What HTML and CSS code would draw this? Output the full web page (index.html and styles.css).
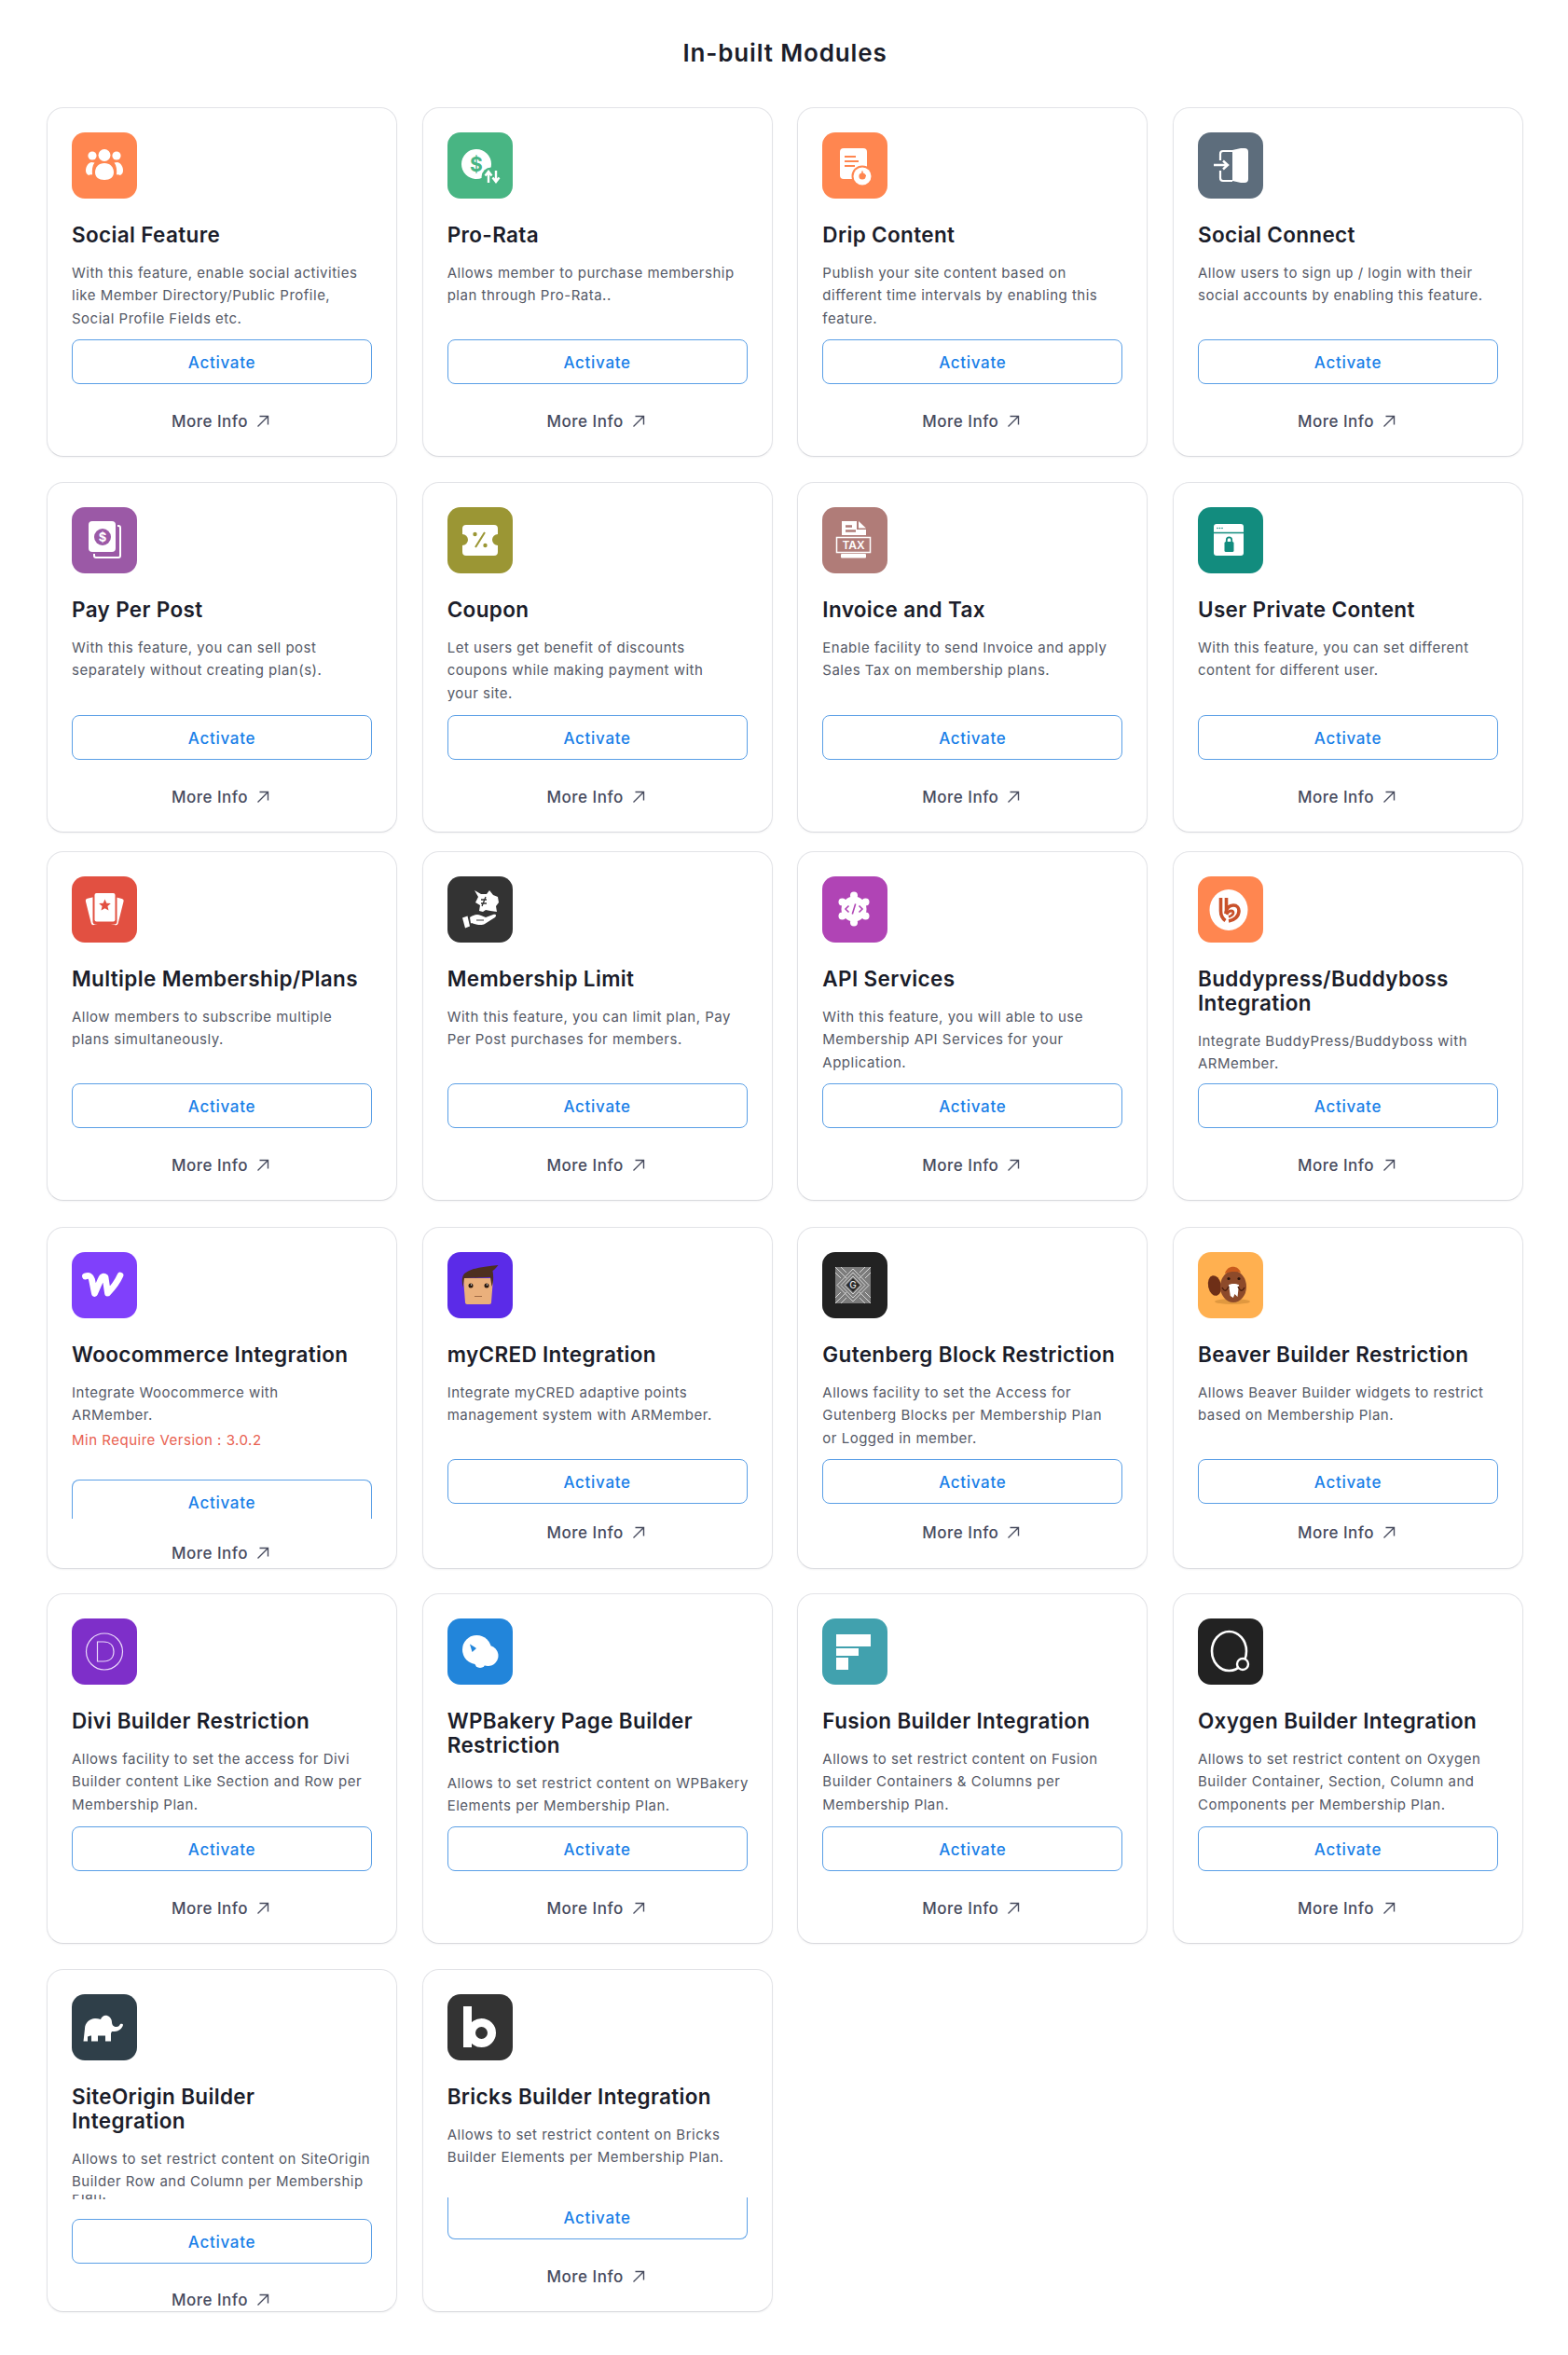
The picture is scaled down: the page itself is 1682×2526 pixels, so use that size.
FILE: index.html
```html
<!DOCTYPE html>
<html lang="en">
<head>
<meta charset="utf-8">
<title>In-built Modules</title>
<link rel="stylesheet" href="styles.css">
</head>
<body>
<main class="page">
<h1 class="page-title">In-built Modules</h1>

<section class="row row-1">
  <article class="card">
    <div class="icon bg-orange"><svg class="ico" viewBox="0 0 70 71" fill="#fff"><circle cx="35" cy="24.5" r="6.5"/><circle cx="22" cy="25" r="4.6"/><circle cx="48" cy="25" r="4.6"/><path d="M25 43c0-6 4-10 10-10s10 4 10 10c0 5-4 8-10 8s-10-3-10-8z"/><path d="M21 32c-4 1-6 5-6 9 0 2 1 4 3 5 1-.6 3-1 4-.5-.5-5 0-10 2.500-13z"/><path d="M49 32c4 1 6 5 6 9 0 2-1 4-3 5-1-.6-3-1-4-.5.500-5 0-10-2.500-13z"/></svg></div>
    <h2 class="title">Social Feature</h2>
    <p class="desc">With this feature, enable social activities<br>like Member Directory/Public Profile,<br>Social Profile Fields etc.</p>
    <a class="btn">Activate</a>
    <a class="more">More Info <svg class="arrow" viewBox="0 0 14 14"><path d="M1.500 12.500 12 2M3.500 1.500h9v9"/></svg></a>
  </article>
  <article class="card">
    <div class="icon bg-green"><svg class="ico" viewBox="0 0 70 71"><circle cx="31" cy="34" r="16" fill="#fff"/><circle cx="47" cy="48" r="10.500" fill="#48b583"/><text x="31" y="41.500" class="svg-t svg-dollar-l">$</text><path d="M44 54V43M40.500 46.500 44 42l3.500 4.500M52 41v11M48.500 48.500 52 53l3.500-4.500" fill="none" stroke="#fff" stroke-width="2.400"/></svg></div>
    <h2 class="title">Pro-Rata</h2>
    <p class="desc">Allows member to purchase membership<br>plan through Pro-Rata..</p>
    <a class="btn">Activate</a>
    <a class="more">More Info <svg class="arrow" viewBox="0 0 14 14"><path d="M1.500 12.500 12 2M3.500 1.500h9v9"/></svg></a>
  </article>
  <article class="card">
    <div class="icon bg-orange"><svg class="ico" viewBox="0 0 70 71"><rect x="19" y="17" width="29" height="33" rx="4" fill="#fff"/><path d="M24 26h12M24 31h15M24 36h11" stroke="#ff8650" stroke-width="2.200"/><circle cx="43" cy="47" r="11.500" fill="#ff8650"/><circle cx="43" cy="47" r="9.500" fill="#fff"/><circle cx="43" cy="47" r="3.600" fill="#ff8650"/><path d="M43 41.500v5h4" stroke="#ff8650" stroke-width="1.500" fill="none"/></svg></div>
    <h2 class="title">Drip Content</h2>
    <p class="desc">Publish your site content based on<br>different time intervals by enabling this<br>feature.</p>
    <a class="btn">Activate</a>
    <a class="more">More Info <svg class="arrow" viewBox="0 0 14 14"><path d="M1.500 12.500 12 2M3.500 1.500h9v9"/></svg></a>
  </article>
  <article class="card">
    <div class="icon bg-slate"><svg class="ico" viewBox="0 0 70 71"><path d="M37 19l9-2h4a4 4 0 0 1 4 4v29a4 4 0 0 1-4 4h-4l-9-2z" fill="#fff"/><path d="M37 20H27a3 3 0 0 0-3 3v7M24 41v8a3 3 0 0 0 3 3h10" fill="none" stroke="#fff" stroke-width="2.200"/><path d="M17 35h14M27 30.500l5 4.500-5 4.500" fill="none" stroke="#fff" stroke-width="2.400"/></svg></div>
    <h2 class="title">Social Connect</h2>
    <p class="desc">Allow users to sign up / login with their<br>social accounts by enabling this feature.</p>
    <a class="btn">Activate</a>
    <a class="more">More Info <svg class="arrow" viewBox="0 0 14 14"><path d="M1.500 12.500 12 2M3.500 1.500h9v9"/></svg></a>
  </article>
</section>

<section class="row row-2">
  <article class="card">
    <div class="icon bg-purple"><svg class="ico" viewBox="0 0 70 71"><path d="M49 20h1a2 2 0 0 1 2 2v30a2 2 0 0 1-2 2H26a2 2 0 0 1-2-2v-2" fill="none" stroke="#fff" stroke-width="2"/><rect x="18" y="15" width="29" height="33" rx="4" fill="#fff"/><circle cx="33" cy="32" r="9" fill="#9b59a6"/><text x="33" y="36.500" class="svg-t svg-dollar-s">$</text></svg></div>
    <h2 class="title">Pay Per Post</h2>
    <p class="desc">With this feature, you can sell post<br>separately without creating plan(s).</p>
    <a class="btn">Activate</a>
    <a class="more">More Info <svg class="arrow" viewBox="0 0 14 14"><path d="M1.500 12.500 12 2M3.500 1.500h9v9"/></svg></a>
  </article>
  <article class="card">
    <div class="icon bg-olive"><svg class="ico" viewBox="0 0 70 71"><path d="M20 19h30a4 4 0 0 1 4 4v6a6 6 0 0 0 0 12v7a4 4 0 0 1-4 4H20a4 4 0 0 1-4-4v-7a6 6 0 0 0 0-12v-6a4 4 0 0 1 4-4z" fill="#fff"/><path d="M40 27 30 43" stroke="#9b9634" stroke-width="2"/><circle cx="29.500" cy="29" r="2.200" fill="#9b9634"/><circle cx="40.500" cy="41" r="2.200" fill="#9b9634"/></svg></div>
    <h2 class="title">Coupon</h2>
    <p class="desc">Let users get benefit of discounts<br>coupons while making payment with<br>your site.</p>
    <a class="btn">Activate</a>
    <a class="more">More Info <svg class="arrow" viewBox="0 0 14 14"><path d="M1.500 12.500 12 2M3.500 1.500h9v9"/></svg></a>
  </article>
  <article class="card">
    <div class="icon bg-rose"><svg class="ico" viewBox="0 0 70 71"><path d="M21 15h16v9h10v6H21z" fill="#fff"/><path d="M39 15l8 7.500h-8z" fill="#fff"/><path d="M25 20.500h7M25 25.500h11" stroke="#b07c78" stroke-width="2.600"/><rect x="15.500" y="32.500" width="36" height="16" fill="none" stroke="#fff" stroke-width="1.500"/><text x="33.500" y="45" class="svg-t svg-tax">TAX</text><rect x="20" y="50" width="27" height="4.500" rx="1" fill="#fff"/></svg></div>
    <h2 class="title">Invoice and Tax</h2>
    <p class="desc">Enable facility to send Invoice and apply<br>Sales Tax on membership plans.</p>
    <a class="btn">Activate</a>
    <a class="more">More Info <svg class="arrow" viewBox="0 0 14 14"><path d="M1.500 12.500 12 2M3.500 1.500h9v9"/></svg></a>
  </article>
  <article class="card">
    <div class="icon bg-teal"><svg class="ico" viewBox="0 0 70 71"><rect x="17" y="18" width="32" height="34" rx="3" fill="#fff"/><path d="M17 27.500h32" stroke="#128c7e" stroke-width="1.500"/><circle cx="21" cy="22.500" r=".8" fill="#128c7e"/><circle cx="23.500" cy="22.500" r=".8" fill="#128c7e"/><circle cx="26" cy="22.500" r=".8" fill="#128c7e"/><rect x="28.500" y="37" width="10" height="11" rx="1.500" fill="#128c7e"/><path d="M30.800 37.500v-2.500a2.700 2.700 0 0 1 5.400 0v2.500" fill="none" stroke="#128c7e" stroke-width="1.800"/></svg></div>
    <h2 class="title">User Private Content</h2>
    <p class="desc">With this feature, you can set different<br>content for different user.</p>
    <a class="btn">Activate</a>
    <a class="more">More Info <svg class="arrow" viewBox="0 0 14 14"><path d="M1.500 12.500 12 2M3.500 1.500h9v9"/></svg></a>
  </article>
</section>

<section class="row row-3">
  <article class="card">
    <div class="icon bg-red"><svg class="ico" viewBox="0 0 70 71"><rect x="17.500" y="22" width="17" height="29" rx="2.500" fill="#fff" transform="rotate(-14 26 36)"/><rect x="36" y="22" width="17" height="29" rx="2.500" fill="#fff" transform="rotate(14 44 36)"/><rect x="22.500" y="16.500" width="26" height="35" rx="3" fill="#e25041"/><rect x="24.500" y="18" width="22" height="30.500" rx="2" fill="#fff"/><polygon points="35.500,24.500 37.300,28.700 41.900,29.100 38.400,32.100 39.500,36.600 35.500,34.200 31.500,36.600 32.600,32.100 29.100,29.100 33.700,28.700" fill="#e25041"/></svg></div>
    <h2 class="title">Multiple Membership/Plans</h2>
    <p class="desc">Allow members to subscribe multiple<br>plans simultaneously.</p>
    <a class="btn">Activate</a>
    <a class="more">More Info <svg class="arrow" viewBox="0 0 14 14"><path d="M1.500 12.500 12 2M3.500 1.500h9v9"/></svg></a>
  </article>
  <article class="card">
    <div class="icon bg-char"><svg class="ico" viewBox="0 0 70 71"><path d="M29 15l7 4h6l3-4 4 5 5 2 1 6-3 4 1 6-7-1-5-1-3 2-4-1 1-6-5-3 3-6z" fill="#fff"/><path d="M36 25h6M36 29h6M41 22l-4 10" stroke="#333" stroke-width="1.300"/><path d="M16 44.500l5.500-2 2.500 11-5 2z" fill="#fff"/><path d="M24 44c4-3 8-4 12-2l5 2 8-3c3-1 4 1 2 3l-11 7c-3 2-9 1-14-1l-1 .5z" fill="#fff"/><path d="M31 47h8" stroke="#333" stroke-width="1.200"/></svg></div>
    <h2 class="title">Membership Limit</h2>
    <p class="desc">With this feature, you can limit plan, Pay<br>Per Post purchases for members.</p>
    <a class="btn">Activate</a>
    <a class="more">More Info <svg class="arrow" viewBox="0 0 14 14"><path d="M1.500 12.500 12 2M3.500 1.500h9v9"/></svg></a>
  </article>
  <article class="card">
    <div class="icon bg-magenta"><svg class="ico" viewBox="0 0 70 71"><g fill="#fff"><circle cx="34" cy="35" r="13.500"/><circle cx="34" cy="20.500" r="4"/><circle cx="34" cy="49.500" r="4"/><circle cx="21.500" cy="27.500" r="4"/><circle cx="46.500" cy="27.500" r="4"/><circle cx="21.500" cy="42.500" r="4"/><circle cx="46.500" cy="42.500" r="4"/></g><path d="M28.500 31.500 25 35l3.500 3.500M39.500 31.500 43 35l-3.500 3.500M35.700 29.500l-3.400 11" fill="none" stroke="#b044b5" stroke-width="1.600"/></svg></div>
    <h2 class="title">API Services</h2>
    <p class="desc">With this feature, you will able to use<br>Membership API Services for your<br>Application.</p>
    <a class="btn">Activate</a>
    <a class="more">More Info <svg class="arrow" viewBox="0 0 14 14"><path d="M1.500 12.500 12 2M3.500 1.500h9v9"/></svg></a>
  </article>
  <article class="card">
    <div class="icon bg-orange"><svg class="ico" viewBox="0 0 70 71"><ellipse cx="33" cy="36" rx="20.500" ry="22" fill="#fff"/><path d="M24.500 23v14c0 5 1.500 8 5 10.500M30.500 23v13M30 40c0-6 4-9 8-9 4 0 6 3 6 6 0 6-5 10-11 11" fill="none" stroke="#c9512b" stroke-width="3.600"/><path d="M31 41c1-3 3-4 5-4 2 0 2.500 2 1.500 3.500-1 1.500-3 2.500-4.500 3" fill="none" stroke="#c9512b" stroke-width="2.800"/></svg></div>
    <h2 class="title">Buddypress/Buddyboss<br>Integration</h2>
    <p class="desc">Integrate BuddyPress/Buddyboss with<br>ARMember.</p>
    <a class="btn">Activate</a>
    <a class="more">More Info <svg class="arrow" viewBox="0 0 14 14"><path d="M1.500 12.500 12 2M3.500 1.500h9v9"/></svg></a>
  </article>
</section>

<section class="row row-4">
  <article class="card card-cut-low">
    <div class="icon bg-violet"><svg class="ico" viewBox="0 0 70 71"><path d="M14.500 26c4-1.500 6 0 7 3.500l3 15 7-16c1-2.500 3-3 4.500-1.500l2.500 17c5-5 10-11 13.500-19" fill="none" stroke="#fff" stroke-width="6.800" stroke-linecap="round" stroke-linejoin="round"/></svg></div>
    <h2 class="title">Woocommerce Integration</h2>
    <p class="desc">Integrate Woocommerce with<br>ARMember.<span class="req">Min Require Version : 3.0.2</span></p>
    <a class="btn">Activate</a>
    <a class="more">More Info <svg class="arrow" viewBox="0 0 14 14"><path d="M1.500 12.500 12 2M3.500 1.500h9v9"/></svg></a>
  </article>
  <article class="card">
    <div class="icon bg-indigo"><svg class="ico" viewBox="0 0 70 71"><path d="M17 28h32l-2 26c0 1-1 2-2 2H21c-1 0-2-1-2-2z" fill="#eab07c"/><path d="M16.500 38c-1.500-8-1-14 4-16.500 8-5 20-6 34-7.500-2 2.500-4 5-6 6 1 6 1 12-1 17l-1.500-10-28 1z" fill="#4d2f20"/><circle cx="25" cy="36" r="2.500" fill="#2a1a10"/><circle cx="42" cy="36" r="2.500" fill="#2a1a10"/><circle cx="25.500" cy="35" r=".7" fill="#fff"/><circle cx="42.500" cy="35" r=".7" fill="#fff"/><path d="M29 47.500h8" stroke="#a06a44" stroke-width="1.200"/></svg></div>
    <h2 class="title">myCRED Integration</h2>
    <p class="desc">Integrate myCRED adaptive points<br>management system with ARMember.</p>
    <a class="btn">Activate</a>
    <a class="more">More Info <svg class="arrow" viewBox="0 0 14 14"><path d="M1.500 12.500 12 2M3.500 1.500h9v9"/></svg></a>
  </article>
  <article class="card">
    <div class="icon bg-ink"><svg class="ico" viewBox="0 0 70 71"><rect x="14" y="16" width="38" height="39" fill="#7c7c7c"/><g fill="none" stroke="#e0e0e0" stroke-width=".9"><path d="M14 16l12 12M52 16 40 28M14 55l12-12M52 55 40 43M20 16l6 6M46 16l-6 6M20 55l6-6M46 55l-6-6M14 22l6 6M52 22l-6 6M14 49l6-6M52 49l-6-6"/><polygon points="33,18 50,35.500 33,53 16,35.500"/><polygon points="33,22 46,35.500 33,49 20,35.500"/><polygon points="33,26 42,35.500 33,45 24,35.500"/></g><polygon points="33,28 40.500,35.500 33,43 25.500,35.500" fill="#2a2a2a"/><text x="33" y="39" class="svg-t svg-g">G</text></svg></div>
    <h2 class="title">Gutenberg Block Restriction</h2>
    <p class="desc">Allows facility to set the Access for<br>Gutenberg Blocks per Membership Plan<br>or Logged in member.</p>
    <a class="btn">Activate</a>
    <a class="more">More Info <svg class="arrow" viewBox="0 0 14 14"><path d="M1.500 12.500 12 2M3.500 1.500h9v9"/></svg></a>
  </article>
  <article class="card">
    <div class="icon bg-amber"><svg class="ico" viewBox="0 0 70 71"><ellipse cx="37" cy="53" rx="19" ry="3" fill="#e0983f"/><ellipse cx="18" cy="36" rx="7" ry="11" fill="#6e2f17" transform="rotate(-12 18 36)"/><ellipse cx="38" cy="37" rx="14" ry="17" fill="#8d4a2a"/><path d="M29 23c2-9 14-10 17-1-5-1.500-11-1.500-17 1z" fill="#c85a1c"/><circle cx="33" cy="28.500" r="1.600" fill="#2a120a"/><circle cx="44" cy="28.500" r="1.600" fill="#2a120a"/><path d="M33 35c3-1.500 8-1.500 11 0l-1.500 13-3-3-1.700 4-3-2z" fill="#fff"/><path d="M26 38c2 4 4 5 7-1M50 38c-2 4-4 5-7-1" fill="none" stroke="#4a1e0e" stroke-width="1.500"/></svg></div>
    <h2 class="title">Beaver Builder Restriction</h2>
    <p class="desc">Allows Beaver Builder widgets to restrict<br>based on Membership Plan.</p>
    <a class="btn">Activate</a>
    <a class="more">More Info <svg class="arrow" viewBox="0 0 14 14"><path d="M1.500 12.500 12 2M3.500 1.500h9v9"/></svg></a>
  </article>
</section>

<section class="row row-5">
  <article class="card">
    <div class="icon bg-grape"><svg class="ico" viewBox="0 0 70 71"><g fill="none" stroke="#ecdcfb" stroke-width="1.200"><circle cx="35" cy="35.500" r="19.500"/><path d="M27.500 25h6.500c7 0 11 4 11 10.500S41 46 34 46h-6.500z"/></g></svg></div>
    <h2 class="title">Divi Builder Restriction</h2>
    <p class="desc">Allows facility to set the access for Divi<br>Builder content Like Section and Row per<br>Membership Plan.</p>
    <a class="btn">Activate</a>
    <a class="more">More Info <svg class="arrow" viewBox="0 0 14 14"><path d="M1.500 12.500 12 2M3.500 1.500h9v9"/></svg></a>
  </article>
  <article class="card">
    <div class="icon bg-blue"><svg class="ico" viewBox="0 0 70 71" fill="#fff"><circle cx="31.500" cy="33.500" r="15.500"/><circle cx="43.500" cy="40" r="11"/><circle cx="35" cy="47" r="6"/><polygon points="24,27.500 31,32 26.500,36" fill="#2285da"/></svg></div>
    <h2 class="title">WPBakery Page Builder<br>Restriction</h2>
    <p class="desc">Allows to set restrict content on WPBakery<br>Elements per Membership Plan.</p>
    <a class="btn">Activate</a>
    <a class="more">More Info <svg class="arrow" viewBox="0 0 14 14"><path d="M1.500 12.500 12 2M3.500 1.500h9v9"/></svg></a>
  </article>
  <article class="card">
    <div class="icon bg-cyan"><svg class="ico" viewBox="0 0 70 71" fill="#fff"><rect x="15" y="17" width="37" height="13"/><rect x="15" y="32" width="24" height="8"/><rect x="15" y="42" width="13" height="13"/></svg></div>
    <h2 class="title">Fusion Builder Integration</h2>
    <p class="desc">Allows to set restrict content on Fusion<br>Builder Containers &amp; Columns per<br>Membership Plan.</p>
    <a class="btn">Activate</a>
    <a class="more">More Info <svg class="arrow" viewBox="0 0 14 14"><path d="M1.500 12.500 12 2M3.500 1.500h9v9"/></svg></a>
  </article>
  <article class="card">
    <div class="icon bg-ink"><svg class="ico" viewBox="0 0 70 71"><ellipse cx="33.500" cy="35" rx="18.500" ry="21" fill="none" stroke="#fff" stroke-width="2.600"/><circle cx="48" cy="49" r="6" fill="#222" stroke="#fff" stroke-width="2.400"/></svg></div>
    <h2 class="title">Oxygen Builder Integration</h2>
    <p class="desc">Allows to set restrict content on Oxygen<br>Builder Container, Section, Column and<br>Components per Membership Plan.</p>
    <a class="btn">Activate</a>
    <a class="more">More Info <svg class="arrow" viewBox="0 0 14 14"><path d="M1.500 12.500 12 2M3.500 1.500h9v9"/></svg></a>
  </article>
</section>

<section class="row row-6">
  <article class="card card-cut-line">
    <div class="icon bg-navy"><svg class="ico" viewBox="0 0 70 71"><path d="M14 37c0-6 5-11 11-11 2 0 4 .5 6 1 1-3 4-5 7-4 3 1 5 4 5 7 0 3 2 5 5 5 2 0 3-1 4-3 1-.5 3-.5 3 1-1 4-5 7-9 7h-3l-1 2v8.500h-6v-6h-8v6h-7v-6h-1l-3 1v5h-4.500z" fill="#fff"/></svg></div>
    <h2 class="title">SiteOrigin Builder<br>Integration</h2>
    <p class="desc">Allows to set restrict content on SiteOrigin<br>Builder Row and Column per Membership<span class="cut-line"><span class="cut-text">Plan.</span></span></p>
    <a class="btn">Activate</a>
    <a class="more">More Info <svg class="arrow" viewBox="0 0 14 14"><path d="M1.500 12.500 12 2M3.500 1.500h9v9"/></svg></a>
  </article>
  <article class="card card-cut-top">
    <div class="icon bg-char"><svg class="ico" viewBox="0 0 70 71"><rect x="17" y="13" width="9" height="44" fill="#fff"/><circle cx="36.500" cy="41.500" r="11" fill="none" stroke="#fff" stroke-width="9"/></svg></div>
    <h2 class="title">Bricks Builder Integration</h2>
    <p class="desc">Allows to set restrict content on Bricks<br>Builder Elements per Membership Plan.</p>
    <a class="btn">Activate</a>
    <a class="more">More Info <svg class="arrow" viewBox="0 0 14 14"><path d="M1.500 12.500 12 2M3.500 1.500h9v9"/></svg></a>
  </article>
</section>
</main>
</body>
</html>
```
FILE: styles.css
```css
* { box-sizing: border-box; }
html, body { margin: 0; background: #fff; }
body { font-family: "Inter", "Open Sans", sans-serif; height: 2526px; overflow: hidden; }
.page { width: 1584px; margin-left: 50px; padding-top: 41px; }
.page-title { margin: 0 0 42px; font-size: 26px; line-height: 32px; font-weight: 600; letter-spacing: .85px; text-align: center; color: #1b1d2a; }

.row { display: grid; grid-template-columns: repeat(4, 376px); column-gap: 26.67px; }
.row-1 { height: 375px; margin-bottom: 27px; }
.row-2 { height: 376px; margin-bottom: 20px; }
.row-3 { height: 375px; margin-bottom: 28px; }
.row-4 { height: 367px; margin-bottom: 26px; }
.row-5 { height: 376px; margin-bottom: 27px; }
.row-6 { height: 368px; }

.card { display: flex; flex-direction: column; min-width: 0; padding: 26px 26px 25px; background: #fff; border: 1px solid #e2e3e7; border-bottom-color: #d9dade; border-radius: 18px; box-shadow: 0 1px 2px rgba(30, 35, 60, .05); }
.icon { flex: none; width: 70px; height: 71px; border-radius: 14px; overflow: hidden; }
.ico { display: block; width: 70px; height: 71px; }
.title { flex: none; margin: 26px 0 0; font-size: 22.500px; line-height: 26px; font-weight: 600; letter-spacing: .35px; color: #1b1d2a; }
.desc { flex: 1 1 0; min-height: 0; margin: 16px 0 0; font-size: 15px; line-height: 24.3px; letter-spacing: .5px; white-space: nowrap; color: #555966; }
.req { display: block; margin-top: 2px; color: #e8604f; }
.btn { flex: none; display: flex; align-items: center; justify-content: center; height: 48px; padding-top: 1px; font-size: 17px; font-weight: 500; letter-spacing: .7px; color: #1a7fe8; border: 1.500px solid #5a9fe6; border-radius: 8px; }
.more { flex: none; display: flex; align-items: center; justify-content: center; gap: 9px; height: 24px; margin-top: 28px; padding-right: 3px; font-size: 17px; font-weight: 500; letter-spacing: .5px; color: #474b5e; }
.arrow { width: 14px; height: 14px; fill: none; stroke: #474b5e; stroke-width: 1.400; }

.row-4 .card { padding-bottom: 26px; }
.row-4 .more { margin-top: 19px; }
.row-4 .card.card-cut-low { padding-bottom: 4px; }
.row-4 .card-cut-low .btn { height: 42px; padding-top: 6px; border-bottom: 0; border-radius: 8px 8px 0 0; }
.row-4 .card-cut-low .more { margin-top: 25px; }
.card-cut-line { padding-bottom: 0; }
.card-cut-line .more { margin-top: 27px; }
.cut-line { display: block; height: 7px; margin-top: 1px; overflow: hidden; position: relative; }
.cut-text { display: block; margin-top: -12px; }
.card-cut-top .btn { height: 45px; padding-top: 0; border-top: 0; border-radius: 0 0 8px 8px; }

.svg-t { font-family: "Inter", sans-serif; text-anchor: middle; letter-spacing: 0; }
.svg-dollar-l { font-size: 21px; font-weight: 700; fill: #48b583; }
.svg-dollar-s { font-size: 13px; font-weight: 700; fill: #fff; }
.svg-tax { font-size: 12px; font-weight: 600; fill: #fff; }
.svg-g { font-size: 10px; font-weight: 500; fill: #e8e8e8; }

.bg-orange { background: #ff8650; }
.bg-green { background: #48b583; }
.bg-slate { background: #5d6d7c; }
.bg-purple { background: #9b59a6; }
.bg-olive { background: #9b9634; }
.bg-rose { background: #b07c78; }
.bg-teal { background: #128c7e; }
.bg-red { background: #e25041; }
.bg-char { background: #333; }
.bg-magenta { background: #b044b5; }
.bg-violet { background: #8040fb; }
.bg-indigo { background: #5b2be8; }
.bg-ink { background: #222; }
.bg-amber { background: #ffb050; }
.bg-grape { background: #7e2fc9; }
.bg-blue { background: #2285da; }
.bg-cyan { background: #41a1ae; }
.bg-navy { background: #2f3f49; }
```
